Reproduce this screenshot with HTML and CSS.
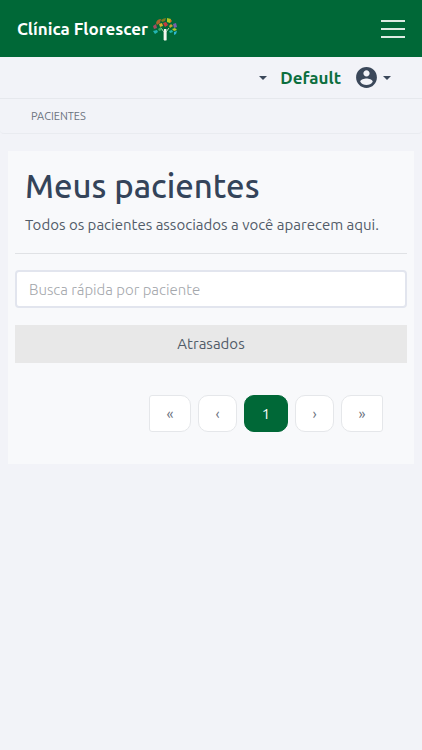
FILE: index.html
```html
<!DOCTYPE html>
<html lang="pt-BR">
<head>
<meta charset="utf-8">
<meta name="viewport" content="width=device-width, initial-scale=1">
<title>Clínica Florescer</title>
<link rel="stylesheet" href="styles.css">
</head>
<body>
<header class="navbar">
  <a class="brand" href="#">
    <span>Clínica Florescer</span>
    <svg class="brand-logo" viewBox="0 0 26 26" aria-hidden="true">
      <path d="M12 24V16L9 12M14 24V16L17 12" fill="none" stroke="#b8d0b8" stroke-width="1"/>
      <path d="M12 13h2.400v11.500h-2.400z" fill="#f4f6f0"/>
      <path d="M4 7q1-4 5-4l-1 4-3 2z" fill="#a8642c"/>
      <path d="M9 4q3-2 5-2l-1 3-3 1z" fill="#7d7a20"/>
      <path d="M15 2l4 1-1 4-3-1z" fill="#b1c722"/>
      <path d="M18 3l2 2-2 2z" fill="#d9701e"/>
      <path d="M11 7l3-1 2 3-3 2z" fill="#c93a40"/>
      <path d="M7 8l3-1 1 3-3 1z" fill="#d7b32c"/>
      <path d="M1 10l3-2 1 4-3 1z" fill="#a54b62"/>
      <path d="M6 13l3-2 1 3-3 1z" fill="#3ba85e"/>
      <path d="M1 15l4-1 1 2-3 2z" fill="#24b5b2"/>
      <path d="M17 10l2-2 2 2-3 2z" fill="#c8a52b"/>
      <path d="M21 8l3-1 1 4-3 1z" fill="#7860aa"/>
      <path d="M20 13l3-1 2 2-3 1z" fill="#b3c72a"/>
      <path d="M17 15l3-1 1 2-3 1z" fill="#22b9aa"/>
      <path d="M22 16l3-1-1 3-2 1z" fill="#2cb5d0"/>
    </svg>
  </a>
  <button class="menu-button" type="button" aria-label="Menu">
    <svg viewBox="0 0 30 30" aria-hidden="true"><path d="M3 7h24M3 15h24M3 23h24" stroke="#dcebe2" stroke-width="2"/></svg>
  </button>
</header>
<div class="toolbar">
  <button class="caret-button" type="button" aria-label="Opções"><span class="caret"></span></button>
  <a class="profile" href="#">Default</a>
  <button class="account" type="button" aria-label="Conta">
    <svg viewBox="0 0 24 24" aria-hidden="true"><path fill="#3b485a" d="M12 2C6.480 2 2 6.480 2 12s4.480 10 10 10 10-4.480 10-10S17.520 2 12 2zm0 3c1.660 0 3 1.340 3 3s-1.340 3-3 3-3-1.340-3-3 1.340-3 3-3zm0 14.200c-2.500 0-4.710-1.280-6-3.220.03-1.990 4-3.080 6-3.080 1.990 0 5.970 1.090 6 3.080-1.290 1.940-3.500 3.220-6 3.220z"/></svg>
    <span class="caret"></span>
  </button>
</div>
<nav class="breadcrumb" aria-label="Localização"><a href="#">PACIENTES</a></nav>
<main class="card">
  <div class="heading">
    <h1>Meus pacientes</h1>
    <p>Todos os pacientes associados a você aparecem aqui.</p>
  </div>
  <hr>
  <input class="search" type="text" placeholder="Busca rápida por paciente" aria-label="Busca rápida por paciente">
  <button class="late" type="button">Atrasados</button>
  <nav class="pagination" aria-label="Paginação">
    <a class="page first" href="#">«</a>
    <a class="page" href="#">‹</a>
    <a class="page active" href="#" aria-current="page">1</a>
    <a class="page" href="#">›</a>
    <a class="page last" href="#">»</a>
  </nav>
</main>
</body>
</html>
```
FILE: styles.css
```css
* { box-sizing: border-box; }

body {
  margin: 0;
  background: #f2f3f8;
  color: #525c69;
  font-family: Ubuntu, "Noto Sans", sans-serif;
  font-size: 15px;
  line-height: 20px;
}

a { color: inherit; text-decoration: none; }

button {
  border: 0;
  padding: 0;
  background: none;
  color: inherit;
  font: inherit;
}

svg { display: block; }

.navbar {
  display: flex;
  align-items: center;
  justify-content: space-between;
  height: 57px;
  padding: 0 14px 0 17px;
  background: #006837;
}

.brand {
  display: flex;
  align-items: center;
  gap: 4px;
  color: #fff;
  font-size: 17px;
  font-weight: 700;
}

.brand-logo { width: 26px; height: 26px; }

.menu-button svg { width: 30px; height: 30px; }

.toolbar {
  display: flex;
  align-items: center;
  justify-content: flex-end;
  height: 42px;
  padding: 0 31px;
  border-bottom: 1px solid #e6e8ed;
}

.caret-button { padding: 8px 0; }

.caret {
  display: block;
  border: 4px solid transparent;
  border-top-color: #3b485a;
  border-bottom: 0;
}

.profile {
  margin: 0 13px;
  color: #0b6e3e;
  font-size: 17px;
  font-weight: 700;
}

.account { display: flex; align-items: center; gap: 4px; }

.account svg { width: 25px; height: 25px; }

.breadcrumb {
  height: 35px;
  padding: 7px 31px;
  border-bottom: 1px solid #e9ebf0;
  border-radius: 4px;
  color: #6a727e;
  font-size: 11px;
}

.card {
  margin: 17px 8px;
  padding: 16px 7px 32px;
  background: #f8f9fb;
}

.heading { padding: 0 10px; }

h1 {
  margin: 0 0 10px;
  color: #34445a;
  font-size: 33px;
  font-weight: 500;
  line-height: 38px;
}

p { margin: 0; }

hr {
  margin: 18px 0 16px;
  border: 0;
  border-top: 1px solid #e0e2e5;
}

.search {
  display: block;
  width: 100%;
  height: 38px;
  padding: 0 12px;
  border: 2px solid #e2e5ee;
  border-radius: 4px;
  background: #fff;
  color: #525c69;
  font: inherit;
  font-weight: 300;
}

.search::placeholder { color: #a4a7ac; opacity: 1; }

.late {
  display: block;
  width: 100%;
  height: 38px;
  margin-top: 17px;
  background: #e8e8e8;
}

.pagination {
  display: flex;
  justify-content: flex-end;
  gap: 7px;
  margin-top: 32px;
  padding-right: 24px;
}

.page {
  display: grid;
  place-items: center;
  width: 39px;
  height: 37px;
  border: 1px solid #e5e7ea;
  border-radius: 10px;
  background: #fff;
  color: #6a727e;
}

.first, .last { width: 42px; }
.first { border-radius: 3px 10px 10px 3px; }
.last { border-radius: 10px 3px 3px 10px; }

.active {
  width: 44px;
  border-color: #006837;
  background: #006837;
  color: #fff;
}
```
